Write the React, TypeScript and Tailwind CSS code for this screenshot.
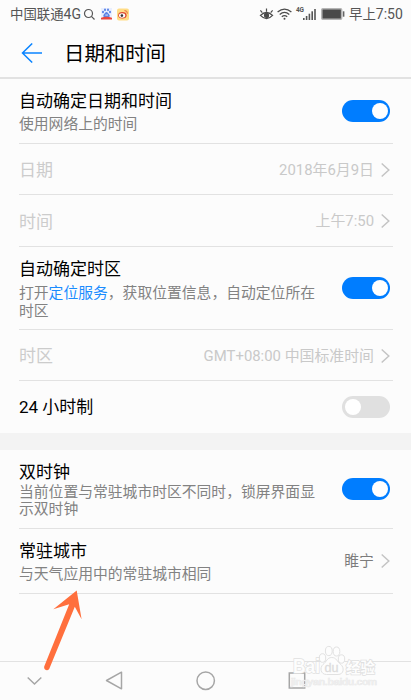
import React from "react";

type RowProps = {
  title: string;
  desc?: React.ReactNode;
  right: React.ReactNode;
  className?: string;
  disabled?: boolean;
};

const Toggle = ({ on }: { on: boolean }) => (
  <div
    className={`flex items-center w-12 h-[22px] rounded-full px-[2.5px] shrink-0 ${
      on ? "bg-[#007dff] justify-end" : "bg-[#e0e0e0] justify-start"
    }`}
  >
    <div className="w-4 h-4 rounded-full bg-white"></div>
  </div>
);

const Arrow = () => (
  <svg width="10" height="16" viewBox="0 0 10 16" fill="none">
    <path d="M1.7 1.5L8.8 8L1.7 14.5" stroke="#c4c4c4" strokeWidth="1.5" />
  </svg>
);

const Value = ({ text, active }: { text: string; active?: boolean }) => (
  <div
    className={`flex items-center gap-1.5 text-[14.9px] whitespace-nowrap ${
      active ? "text-[#7c7c7c]" : "text-[#c9c9c9]"
    }`}
  >
    <span>{text}</span>
    <Arrow />
  </div>
);

const Row = ({ title, desc, right, className, disabled }: RowProps) => (
  <div
    className={`flex justify-between ml-[19px] mr-[18px] pr-[3px] border-[#e2e2e2] ${className}`}
  >
    <div>
      <h2
        className={`text-[17px] leading-6 whitespace-nowrap ${
          disabled ? "text-[#cccccc]" : "text-black"
        }`}
      >
        {title}
      </h2>
      {desc}
    </div>
    {right}
  </div>
);

const StatusBar = () => (
  <div className="flex items-center justify-between h-7 pl-2.5 pr-[9px] text-[13.4px] leading-5 text-[#555555]">
    <div className="flex items-center">
      <span className="w-[71px] whitespace-nowrap">
        中国联通<span className="text-[14px]">4G</span>
      </span>
      <svg className="ml-[2px]" width="13" height="13" viewBox="0 0 13 13" fill="none" stroke="#555" strokeWidth="1.2">
        <circle cx="5.5" cy="5.5" r="4" />
        <path d="M8.4 8.4L11.5 11.5" />
      </svg>
      <svg className="ml-1" width="13" height="12" viewBox="0 0 13 12">
        <rect x="1" width="11" height="9" fill="#e9efff" />
        <g fill="#5b83e6">
          <ellipse cx="5" cy="1.8" rx="1" ry="1.4" />
          <ellipse cx="8" cy="1.8" rx="1" ry="1.4" />
          <ellipse cx="3" cy="4" rx="1" ry="1.3" />
          <ellipse cx="10" cy="4" rx="1" ry="1.3" />
          <path d="M6.5 4C5.4 4 5 5.3 3.9 6.2C2.8 7.3 3.2 9.2 4.9 9.2H8.2C9.9 9.2 10.2 7.3 9.1 6.2C8 5.3 7.6 4 6.5 4Z" />
        </g>
        <path d="M6 6.2V8M7.2 6.2V8" stroke="white" strokeWidth="0.6" />
        <path d="M1 9.7Q6.5 7.8 12 9.7V11.6H1Z" fill="#e8453f" />
      </svg>
      <svg className="ml-[3px]" width="14" height="13" viewBox="0 0 14 13">
        <rect x="1" y="0.5" width="12" height="12" rx="2" fill="#ffdc85" />
        <ellipse cx="6.4" cy="7.3" rx="4.2" ry="3.3" fill="#df4b35" />
        <ellipse cx="6.1" cy="7.5" rx="3.1" ry="2.2" fill="white" />
        <circle cx="5.9" cy="7.6" r="1.3" fill="#333" />
        <path d="M8.5 2.6Q11.6 2.4 11.4 5.6" stroke="#e8663c" strokeWidth="1" fill="none" />
      </svg>
    </div>
    <div className="flex items-center">
      <svg width="15" height="13" viewBox="0 0 15 13" fill="none" stroke="#4c4c4c" strokeWidth="1.2">
        <path d="M1.4 7.4Q7.5 1.6 13.6 7.4Q7.5 13.8 1.4 7.4Z" />
        <path d="M7.5 0.5V3.8M1.4 2.4L3.3 4.7M13.6 2.4L11.7 4.7" />
        <circle cx="7.5" cy="7.4" r="2" fill="#4c4c4c" />
      </svg>
      <svg className="ml-[3px]" width="15" height="12" viewBox="0 0 15 12" fill="none" stroke="#4c4c4c" strokeWidth="1.3">
        <path d="M0.6 4Q7.5 -1.8 14.4 4" />
        <path d="M2.7 6.4Q7.5 2.4 12.3 6.4" />
        <path d="M4.8 8.7Q7.5 6.4 10.2 8.7" />
        <circle cx="7.5" cy="10.7" r="1" fill="#4c4c4c" stroke="none" />
      </svg>
      <span className="ml-1 -mt-2 w-[7px] text-[6.5px] leading-[6px] font-bold tracking-tighter">4G</span>
      <svg width="13" height="13" viewBox="0 0 13 13" fill="#555">
        <rect x="0" y="10" width="1.6" height="2" />
        <rect x="2.8" y="8" width="1.6" height="4" />
        <rect x="5.6" y="5.7" width="1.6" height="6.3" />
        <rect x="8.4" y="3.3" width="1.6" height="8.7" />
        <rect x="11.2" y="1" width="1.6" height="11" />
      </svg>
      <svg className="ml-[5px]" width="24" height="12" viewBox="0 0 24 12">
        <rect x="0.8" y="0.8" width="19.8" height="10.4" rx="1" fill="#4a4a4a" stroke="#b5b5b5" strokeWidth="1.5" />
        <rect x="21.8" y="3.3" width="1.6" height="5.4" fill="#666" />
      </svg>
      <span className="ml-1 w-[53px] whitespace-nowrap">
        早上<span className="text-[14px]">7:50</span>
      </span>
    </div>
  </div>
);

const Watermark = () => (
  <svg className="absolute left-[288px] top-[642px]" width="100" height="48" viewBox="0 0 100 48">
    <g fill="#fdfdfd" stroke="#e2e2e2" strokeWidth="1">
      <ellipse cx="34.5" cy="16" rx="3.2" ry="4.3" />
      <ellipse cx="40.8" cy="9" rx="3.4" ry="4.6" />
      <ellipse cx="48.5" cy="9.5" rx="3.3" ry="4.5" />
      <ellipse cx="53.5" cy="17" rx="3.2" ry="4.2" />
      <path d="M43.7 15.5C39 15.5 38.5 20 35 22.5C31.5 25.5 32.5 32.5 38.5 32.5H50C56 32.5 56.5 25.5 52.8 22.5C49 20 48.8 15.5 43.7 15.5Z" />
    </g>
    <g
      className="[paint-order:stroke] font-['Liberation_Sans','Noto_Sans_CJK_SC',sans-serif]"
      fill="#fdfdfd"
      stroke="#e0e0e0"
      strokeWidth="1.5"
      fontWeight="700"
    >
      <text x="5" y="31" fontSize="20" textLength="27" lengthAdjust="spacingAndGlyphs">Bai</text>
      <text x="36.5" y="29.5" fontSize="12.5" fontWeight="400" textLength="14" lengthAdjust="spacingAndGlyphs" fill="#dcdcdc" strokeWidth="0.3">du</text>
      <text x="58" y="30.5" fontSize="14.5" textLength="29" lengthAdjust="spacingAndGlyphs">经验</text>
      <text x="3" y="43" fontSize="9.5" fill="#f0f0f0" strokeWidth="0.7" stroke="#e6e6e6" fontWeight="400" textLength="86" lengthAdjust="spacingAndGlyphs">jingyan.baidu.com</text>
    </g>
  </svg>
);

const App = () => {
  return (
    <div className="relative flex flex-col w-[411px] h-[700px] overflow-hidden bg-[#fcfcfc] font-['Roboto','Noto_Sans_CJK_SC',sans-serif]">
      <StatusBar />
      <header className="flex items-center h-[51px] pl-[21px] border-b-2 border-[#e2e2e2]">
        <svg width="22" height="20" viewBox="0 0 22 20" fill="none" stroke="#0a84ff" strokeWidth="1.5">
          <path d="M21 10H1.5M11.2 0.5L1.5 10L11.2 19.5" />
        </svg>
        <h1 className="ml-[21px] pt-[3px] text-[20.4px] leading-7 text-black">日期和时间</h1>
      </header>

      <Row
        className="h-[65px] pt-[10px] border-b"
        title="自动确定日期和时间"
        desc={<p className="text-[14.8px] leading-[23px] text-[#828282]">使用网络上的时间</p>}
        right={<div className="pt-[11px]"><Toggle on /></div>}
      />
      <Row
        className="h-[51px] pt-0.5 items-center border-b"
        title="日期"
        disabled
        right={<Value text="2018年6月9日" />}
      />
      <Row
        className="h-[52px] pt-0.5 items-center border-b"
        title="时间"
        disabled
        right={<Value text="上午7:50" />}
      />
      <Row
        className="h-[83px] pt-[10px] border-b"
        title="自动确定时区"
        desc={
          <p className="text-[14.8px] leading-[18px] pt-[3px] text-[#828282] whitespace-nowrap">
            打开<span className="text-[#1a8cff]">定位服务</span>，获取位置信息，自动定位所在
            <br />
            时区
          </p>
        }
        right={<div className="pt-5"><Toggle on /></div>}
      />
      <Row
        className="h-[51px] pt-0.5 items-center border-b"
        title="时区"
        disabled
        right={<Value text="GMT+08:00 中国标准时间" />}
      />
      <Row className="h-[52px] items-center" title="24 小时制" right={<Toggle on={false} />} />

      <div className="h-[17px] bg-[#f3f3f3]"></div>

      <Row
        className="h-[79px] pt-[10px] border-b"
        title="双时钟"
        desc={
          <p className="text-[14.8px] leading-[17px] text-[#828282] whitespace-nowrap">
            当前位置与常驻城市时区不同时，锁屏界面显
            <br />
            示双时钟
          </p>
        }
        right={<div className="pt-[18px]"><Toggle on /></div>}
      />
      <Row
        className="h-[65px] pt-[10px] border-b"
        title="常驻城市"
        desc={<p className="text-[14.8px] leading-[23px] text-[#828282]">与天气应用中的常驻城市相同</p>}
        right={<div className="pt-[11px]"><Value text="睢宁" active /></div>}
      />

      <nav className="mt-auto flex items-center h-[39px] pl-[27px] border-t border-[#e2e2e2]">
        <svg width="15" height="10" viewBox="0 0 15 10" fill="none" stroke="#a6a6a6" strokeWidth="1.5">
          <path d="M0.7 1.5L7.5 8L14.3 1.5" />
        </svg>
        <svg className="ml-[63px]" width="18" height="20" viewBox="0 0 18 20" fill="none" stroke="#a6a6a6" strokeWidth="1.5" strokeLinejoin="round">
          <path d="M1.5 9.5L16.5 1.2V17.8Z" />
        </svg>
        <svg className="ml-[73px]" width="20" height="20" viewBox="0 0 20 20" fill="none" stroke="#a6a6a6" strokeWidth="1.5">
          <circle cx="9.7" cy="9.7" r="8.7" />
        </svg>
        <svg className="ml-[72px]" width="18" height="18" viewBox="0 0 18 18" fill="none" stroke="#a6a6a6" strokeWidth="1.5">
          <rect x="1.3" y="1" width="15.4" height="15" />
        </svg>
      </nav>

      <Watermark />
      {/* pointer to the home city row */}
      <svg className="absolute left-[44px] top-[588px]" width="42" height="84" viewBox="0 0 42 84">
        <path
          d="M32.7 2.5L37.6 31.2L30.8 18.7L5.2 81Q3.3 83.2 1 81.5Q-0.3 80 0.3 78.2L25.2 16.2L9.3 21.3Z"
          fill="#ff6f3d"
        />
      </svg>
    </div>
  );
};

export default App;
